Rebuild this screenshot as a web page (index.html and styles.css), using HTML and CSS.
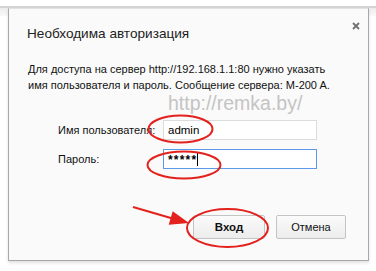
FILE: index.html
```html
<!DOCTYPE html>
<html lang="ru">
<head>
<meta charset="utf-8">
<link rel="stylesheet" href="styles.css">
</head>
<body>
<div class="topline"></div>
<div class="dialog">
  <div class="title">Необходима авторизация</div>
  <svg class="close" width="8" height="8" viewBox="0 0 8 8"><path d="M1 1L7 7M7 1L1 7" stroke="#707070" stroke-width="1.8" fill="none"/></svg>
  <p class="msg">Для доступа на сервер http://192.168.1.1:80 нужно указать<br>имя пользователя и пароль. Сообщение сервера: M-200 A.</p>
  <div class="watermark">http://remka.by/</div>
  <div class="form">
    <label class="label">Имя пользователя:</label>
    <div class="input">admin</div>
    <label class="label">Пароль:</label>
    <div class="input focus"><span class="stars">*****</span><span class="caret"></span></div>
  </div>
  <div class="buttons">
    <button class="btn primary">Вход</button>
    <button class="btn">Отмена</button>
  </div>
  <svg class="marks" width="361" height="253" viewBox="0 0 361 253">
    <g fill="none" stroke="#e3211d" stroke-width="2">
      <ellipse cx="172.5" cy="121" rx="32" ry="13.5"/>
      <ellipse cx="176" cy="157" rx="36.5" ry="13.5"/>
      <ellipse cx="219.5" cy="220" rx="40.5" ry="19"/>
      <line x1="125" y1="199" x2="168" y2="211.5"/>
    </g>
    <polygon points="181,215 164.7,203.3 160.7,216.7" fill="#e3211d"/>
  </svg>
</div>
</body>
</html>
```
FILE: styles.css
```css
html, body {
  margin: 0;
  padding: 0;
  background: #ffffff;
}
body {
  width: 376px;
  height: 271px;
  overflow: hidden;
  font-family: "Liberation Sans", Arial, sans-serif;
  color: #000;
}
.topline {
  height: 10px;
  box-sizing: border-box;
  border-top: 2px solid #d4d4d4;
  margin-top: 6px;
  margin-bottom: -8px;
  background: linear-gradient(#ececec, #fafafa);
}
.dialog {
  position: relative;
  margin-left: 8px;
  width: 361px;
  height: 253px;
  box-sizing: border-box;
  background: #fafafa;
  border: 1px solid #a8a8a8;
  border-top: 1px solid #e2e2e2;
  box-shadow: 0 2px 3px rgba(0,0,0,0.12);
  padding: 16px 0 0 18px;
}
.title {
  font-size: 13.6px;
  line-height: 17px;
  color: #222;
}
.close {
  position: absolute;
  right: 8px;
  top: 13px;
}
.msg {
  margin: 19px 0 0 1px;
  font-size: 11px;
  line-height: 16px;
  color: #111;
}
.watermark {
  margin: 0 0 0 141px;
  font-size: 19.5px;
  line-height: 20px;
  color: #c4c4c4;
}
.form {
  margin: 7px 0 0 31px;
  display: grid;
  grid-template-columns: 105px 154px;
  row-gap: 9px;
  align-items: center;
}
.label {
  font-size: 11px;
  color: #111;
}
.input {
  height: 20px;
  box-sizing: border-box;
  border: 1px solid #dcdcdc;
  background: #fff;
  font-size: 11.5px;
  line-height: 18px;
  padding-left: 4px;
  color: #000;
  display: flex;
  align-items: center;
}
.input.focus {
  border-color: #5b9ae8;
}
.stars {
  font-size: 12px;
  letter-spacing: 1.2px;
  font-weight: bold;
  margin-top: 2px;
}
.caret {
  display: inline-block;
  width: 1px;
  height: 14px;
  background: #000;
  margin-left: 0;
}
.buttons {
  display: flex;
  justify-content: flex-end;
  gap: 11px;
  margin: 46px 22px 0 0;
}
.btn {
  height: 24px;
  width: 70px;
  box-sizing: border-box;
  border: 1px solid #c4c4c4;
  border-radius: 2px;
  background: linear-gradient(#fbfbfb, #ececec);
  font-family: "Liberation Sans", Arial, sans-serif;
  font-size: 11px;
  color: #111;
  padding: 0;
}
.btn.primary {
  width: 72px;
  font-weight: bold;
  font-size: 11.5px;
}
.marks {
  position: absolute;
  left: -1px;
  top: -1px;
  pointer-events: none;
}
```
